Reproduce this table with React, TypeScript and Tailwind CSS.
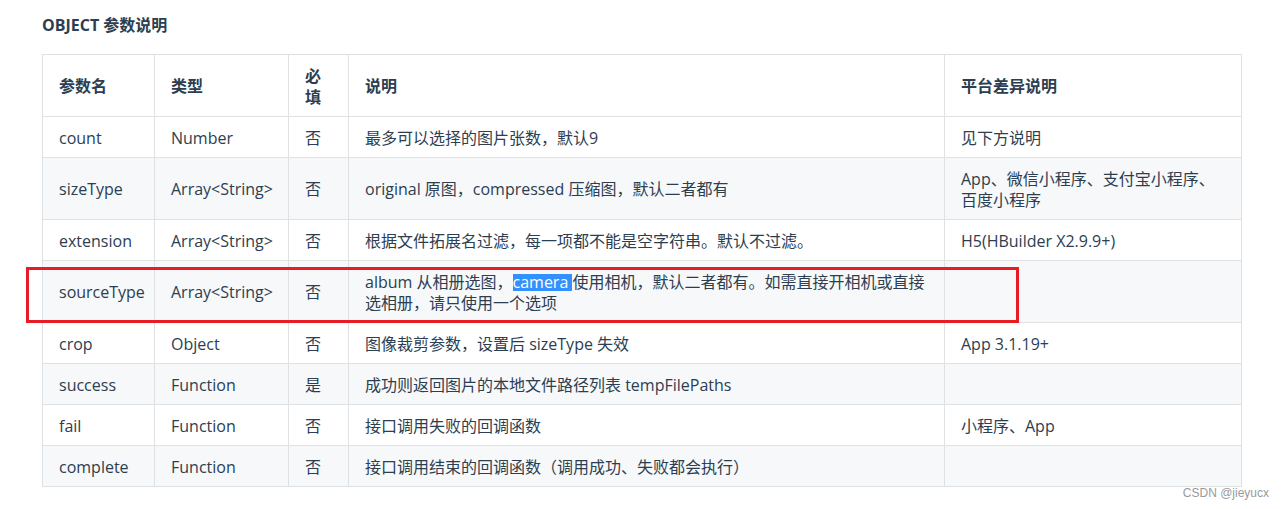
import React from "react";

type Row = { name: string; type: string; req: string; desc: React.ReactNode; plat: React.ReactNode };

const rows: Row[] = [
  { name: "count", type: "Number", req: "否", desc: "最多可以选择的图片张数，默认9", plat: "见下方说明" },
  {
    name: "sizeType",
    type: "Array<String>",
    req: "否",
    desc: "original 原图，compressed 压缩图，默认二者都有",
    plat: "App、微信小程序、支付宝小程序、百度小程序",
  },
  {
    name: "extension",
    type: "Array<String>",
    req: "否",
    desc: "根据文件拓展名过滤，每一项都不能是空字符串。默认不过滤。",
    plat: "H5(HBuilder X2.9.9+)",
  },
  {
    name: "sourceType",
    type: "Array<String>",
    req: "否",
    desc: (
      <>
        album 从相册选图，
        <span className="inline-block h-[17px] leading-[17px] bg-[#3390ff] text-white">camera&nbsp;</span>
        使用相机，默认二者都有。如需直接开相机或直接选相册，请只使用一个选项
      </>
    ),
    plat: "",
  },
  { name: "crop", type: "Object", req: "否", desc: "图像裁剪参数，设置后 sizeType 失效", plat: "App 3.1.19+" },
  { name: "success", type: "Function", req: "是", desc: "成功则返回图片的本地文件路径列表 tempFilePaths", plat: "" },
  { name: "fail", type: "Function", req: "否", desc: "接口调用失败的回调函数", plat: "小程序、App" },
  { name: "complete", type: "Function", req: "否", desc: "接口调用结束的回调函数（调用成功、失败都会执行）", plat: "" },
];

const cell = "border border-[#dfe2e5] px-4 pt-[10.5px] pb-[8.5px] align-middle text-left";

export default function App() {
  return (
    <div
      className="relative w-[1284px] h-[509px] bg-white text-[#2c3e50] overflow-hidden"
      style={{ fontFamily: '"Open Sans", "Noto Sans CJK SC", sans-serif' }}
    >
      <div className="pl-[42px] pt-[15px]">
        <div className="text-[16px] leading-[21px] font-bold mb-[18px]">OBJECT 参数说明</div>
        <table className="table-fixed border-collapse w-[1199px] text-[16px] leading-[21px]">
          <colgroup>
            <col className="w-[112px]" />
            <col className="w-[134px]" />
            <col className="w-[60px]" />
            <col className="w-[596px]" />
            <col className="w-[297px]" />
          </colgroup>
          <thead>
            <tr className="bg-white">
              <th className={`${cell} font-bold`}>参数名</th>
              <th className={`${cell} font-bold`}>类型</th>
              <th className={`${cell} font-bold`}>必填</th>
              <th className={`${cell} font-bold`}>说明</th>
              <th className={`${cell} font-bold`}>平台差异说明</th>
            </tr>
          </thead>
          <tbody>
            {rows.map((r, i) => (
              <tr key={r.name} className={i % 2 === 1 ? "bg-[#f6f8fa]" : "bg-white"}>
                <td className={cell}>{r.name}</td>
                <td className={cell}>{r.type}</td>
                <td className={cell}>{r.req}</td>
                <td className={cell}>{r.desc}</td>
                <td className={cell}>{r.plat}</td>
              </tr>
            ))}
          </tbody>
        </table>
      </div>
      <div className="absolute left-[26px] top-[267px] w-[993px] h-[56px] border-[3px] border-[#e81c24]" />
      <div
        className="absolute right-[15px] top-[485px] text-[12px] leading-[16px] text-[#9a9a9a]"
        style={{ fontFamily: '"Liberation Sans", sans-serif' }}
      >
        CSDN @jieyucx
      </div>
    </div>
  );
}
